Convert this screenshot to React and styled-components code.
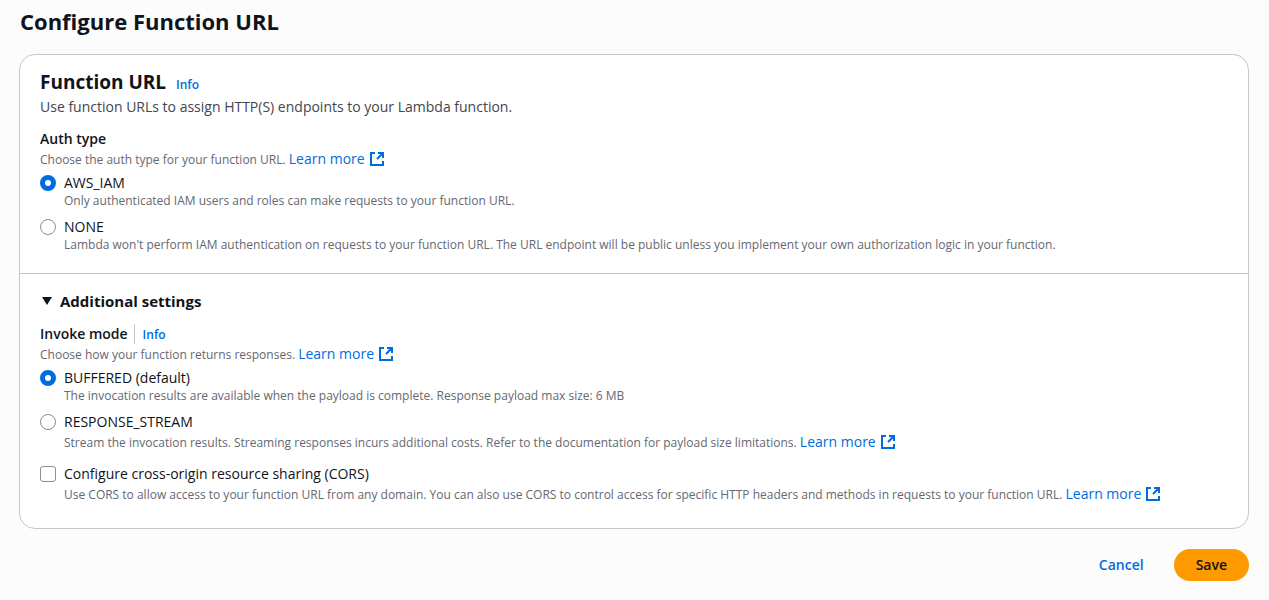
import React from "react";
import styled, { createGlobalStyle } from "styled-components";

const Global = createGlobalStyle`
  *, *::before, *::after { box-sizing: border-box; }
  body {
    margin: 0;
    background: #fcfcfd;
    color: #0f141a;
    font-family: "Open Sans", "Noto Sans", sans-serif;
    font-size: 14px;
    line-height: 20px;
  }
`;

const Page = styled.main`
  padding: 6px 20px 19px 19px;
`;

const PageTitle = styled.h1`
  margin: 0 0 18px 1px;
  font-size: 22px;
  line-height: 30px;
  font-weight: 700;
`;

const Card = styled.section`
  border: 1px solid #c6c6cd;
  border-radius: 16px;
  background: #fff;
`;

const Section = styled.div`
  padding: ${(p) => (p.$settings ? "17px 20px 24px" : "14px 20px 20px")};
  border-top: ${(p) => (p.$settings ? "1px solid #c6c6cd" : "0")};
`;

const CardHeading = styled.div`
  display: flex;
  align-items: baseline;
  gap: 10px;
  margin-bottom: 2px;
`;

const CardTitle = styled.h2`
  margin: 0;
  font-size: 19px;
  line-height: 26px;
  font-weight: 700;
`;

const Lead = styled.p`
  margin: 0 0 12px;
  color: #424650;
`;

const Link = styled.a`
  color: #006ce0;
  font-size: 14px;
  line-height: 20px;
  text-decoration: none;
  white-space: nowrap;
`;

const InfoLink = styled(Link)`
  font-size: 12px;
  font-weight: 600;
`;

const ExternalIcon = styled.svg`
  width: 16px;
  height: 16px;
  margin-left: 4px;
  vertical-align: -3px;
  fill: none;
  stroke: currentColor;
  stroke-width: 2;
`;

const Fieldset = styled.fieldset`
  min-width: 0;
  margin: 0;
  padding: 0;
  border: 0;
`;

const Legend = styled.legend`
  display: flex;
  height: 20px;
  padding: 0;
  font-weight: 600;
`;

const LegendInfo = styled.span`
  margin-left: 6px;
  padding-left: 8px;
  border-left: 1px solid #c6c6cd;
`;

const Hint = styled.p`
  margin: 0 0 3px;
  color: #656871;
  font-size: 12px;
  line-height: 20px;
`;

const Option = styled.div`
  display: grid;
  grid-template-columns: 16px 1fr;
  column-gap: 8px;
  align-items: center;
  margin-top: ${(p) => (p.$first ? "0" : p.$apart ? "12px" : "8px")};
`;

const Radio = styled.input.attrs({ type: "radio" })`
  appearance: none;
  width: 16px;
  height: 16px;
  margin: 0;
  border: 1px solid #8c8c94;
  border-radius: 50%;
  background: #fff;
  &:checked { border: 5px solid #006ce0; }
`;

const Checkbox = styled.input.attrs({ type: "checkbox" })`
  appearance: none;
  width: 16px;
  height: 16px;
  margin: 0;
  border: 1px solid #8c8c94;
  border-radius: 3px;
  background: #fff;
  &:checked { background: #006ce0; border-color: #006ce0; }
`;

const OptionText = styled.p`
  grid-column: 2;
  margin: 0;
  color: #656871;
  font-size: 12px;
  line-height: 16px;
`;

const Toggle = styled.button`
  display: flex;
  align-items: center;
  gap: 6px;
  margin: 0 0 13px;
  padding: 0;
  border: 0;
  background: none;
  color: inherit;
  font: inherit;
  font-size: 15px;
  font-weight: 700;
  line-height: 20px;
`;

const Caret = styled.svg`
  width: 14px;
  height: 14px;
  fill: currentColor;
`;

const Actions = styled.div`
  display: flex;
  justify-content: flex-end;
  gap: 8px;
  margin-top: 20px;
`;

const Button = styled.button`
  height: 32px;
  padding: 0 22px;
  border: 0;
  border-radius: 16px;
  background: ${(p) => (p.$primary ? "#ff9900" : "transparent")};
  color: ${(p) => (p.$primary ? "#0f141a" : "#006ce0")};
  font: inherit;
  font-weight: 600;
`;

const LearnMore = () => (
  <Link href="#learn-more">
    Learn more
    <ExternalIcon viewBox="0 0 16 16" aria-hidden="true">
      <path d="M9 2h5v5M8 8l6-6M14 10v4H2V2h4" />
    </ExternalIcon>
  </Link>
);

const Choice = ({ control: Control = Radio, id, label, children, link, first, apart, ...rest }) => (
  <Option $first={first} $apart={apart}>
    <Control id={id} aria-describedby={id + "-text"} {...rest} />
    <label htmlFor={id}>{label}</label>
    <OptionText id={id + "-text"}>
      {children}
      {link && <> <LearnMore /></>}
    </OptionText>
  </Option>
);

export default function App() {
  return (
    <>
      <Global />
      <Page>
        <PageTitle>Configure Function URL</PageTitle>
        <Card>
          <Section>
            <CardHeading>
              <CardTitle>Function URL</CardTitle>
              <InfoLink href="#info">Info</InfoLink>
            </CardHeading>
            <Lead>Use function URLs to assign HTTP(S) endpoints to your Lambda function.</Lead>
            <Fieldset>
              <Legend>Auth type</Legend>
              <Hint>Choose the auth type for your function URL. <LearnMore /></Hint>
              <Choice id="iam" name="auth" label="AWS_IAM" defaultChecked first>
                Only authenticated IAM users and roles can make requests to your function URL.
              </Choice>
              <Choice id="none" name="auth" label="NONE">
                Lambda won't perform IAM authentication on requests to your function URL. The URL endpoint will be public unless you implement your own authorization logic in your function.
              </Choice>
            </Fieldset>
          </Section>
          <Section $settings>
            <Toggle type="button" aria-expanded="true">
              <Caret viewBox="0 0 14 14" aria-hidden="true">
                <path d="M2 3h10L7 11z" />
              </Caret>
              Additional settings
            </Toggle>
            <Fieldset>
              <Legend>
                Invoke mode
                <LegendInfo><InfoLink href="#invoke-info">Info</InfoLink></LegendInfo>
              </Legend>
              <Hint>Choose how your function returns responses. <LearnMore /></Hint>
              <Choice id="buffered" name="mode" label="BUFFERED (default)" defaultChecked first>
                The invocation results are available when the payload is complete. Response payload max size: 6 MB
              </Choice>
              <Choice id="stream" name="mode" label="RESPONSE_STREAM" link>
                Stream the invocation results. Streaming responses incurs additional costs. Refer to the documentation for payload size limitations.
              </Choice>
            </Fieldset>
            <Choice control={Checkbox} id="cors" label="Configure cross-origin resource sharing (CORS)" link apart>
              Use CORS to allow access to your function URL from any domain. You can also use CORS to control access for specific HTTP headers and methods in requests to your function URL.
            </Choice>
          </Section>
        </Card>
        <Actions>
          <Button type="button">Cancel</Button>
          <Button type="button" $primary>Save</Button>
        </Actions>
      </Page>
    </>
  );
}
